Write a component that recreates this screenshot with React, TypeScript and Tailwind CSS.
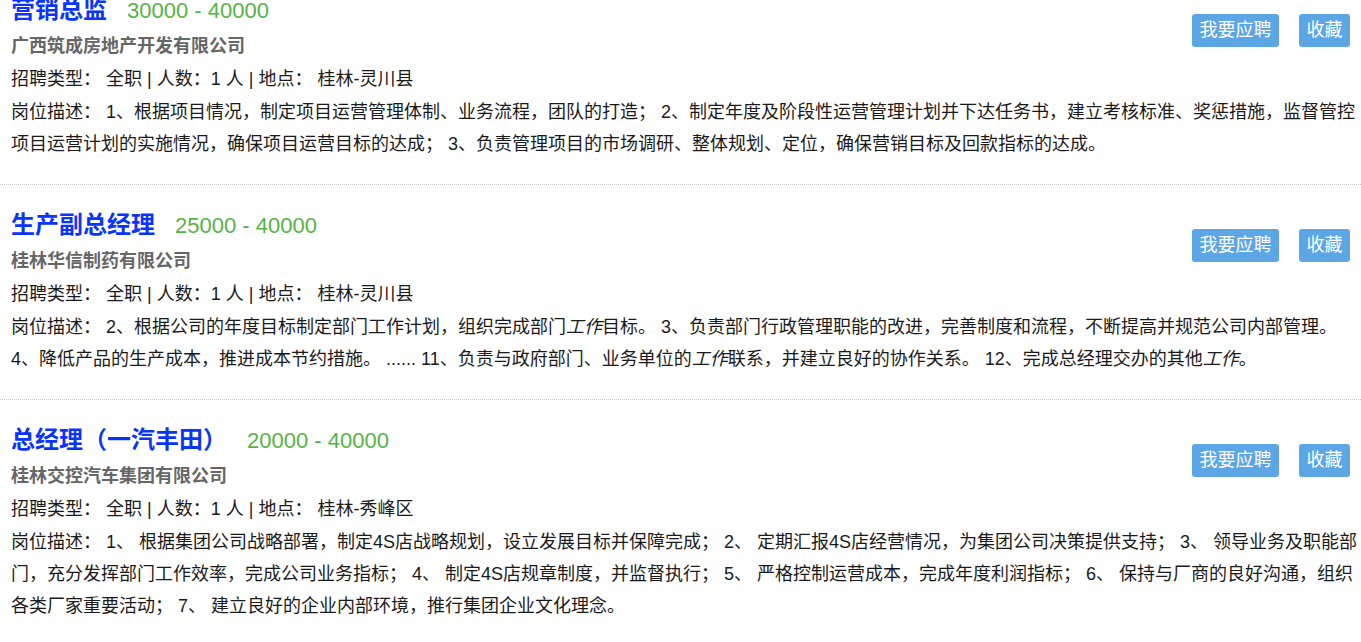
import React from 'react';

type Job = {
  id: number;
  title: string;
  salary: string;
  company: string;
  type: string;
  count: string;
  place: string;
  desc: React.ReactNode;
};

const jobs: Job[] = [
  {
    id: 1,
    title: '营销总监',
    salary: '30000 - 40000',
    company: '广西筑成房地产开发有限公司',
    type: '全职',
    count: '1',
    place: '桂林-灵川县',
    desc: (
      <>
        1、根据项目情况，制定项目运营管理体制、业务流程，团队的打造； 2、制定年度及阶段性运营管理计划并下达任务书，建立考核标准、奖惩措施，监督管控项目运营计划的实施情况，确保项目运营目标的达成；
        3、负责管理项目的市场调研、整体规划、定位，确保营销目标及回款指标的达成。
      </>
    ),
  },
  {
    id: 2,
    title: '生产副总经理',
    salary: '25000 - 40000',
    company: '桂林华信制药有限公司',
    type: '全职',
    count: '1',
    place: '桂林-灵川县',
    desc: (
      <>
        2、根据公司的年度目标制定部门工作计划，组织完成部门<em>工作</em>目标。 3、负责部门行政管理职能的改进，完善制度和流程，不断提高并规范公司内部管理。 4、降低产品的生产成本，推进成本节约措施。 ...... 11、负责与政府部门、业务单位的<em>工作</em>联系，并建立良好的协作关系。 12、完成总经理交办的其他<em>工作</em>。
      </>
    ),
  },
  {
    id: 3,
    title: '总经理（一汽丰田）',
    salary: '20000 - 40000',
    company: '桂林交控汽车集团有限公司',
    type: '全职',
    count: '1',
    place: '桂林-秀峰区',
    desc: (
      <>
        1、 根据集团公司战略部署，制定4S店战略规划，设立发展目标并保障完成； 2、 定期汇报4S店经营情况，为集团公司决策提供支持； 3、 领导业务及职能部门，充分发挥部门工作效率，完成公司业务指标； 4、 制定4S店规章制度，并监督执行； 5、 严格控制运营成本，完成年度利润指标； 6、 保持与厂商的良好沟通，组织各类厂家重要活动； 7、 建立良好的企业内部环境，推行集团企业文化理念。
      </>
    ),
  },
];

function JobItem({ job }: { job: Job }) {
  return (
    <div className="border-b border-dotted border-[#c8c8c8] pl-[11px] pr-[3px] pt-[20px] pb-[24px]">
      <div className="flex items-start">
        <div className="flex-1">
          <div className="flex items-center h-[40px]">
            <span className="text-[24px] font-bold text-[#0b35f6]">{job.title}</span>
            <span className="ml-[20px] text-[22px] text-[#55b446]">{job.salary}</span>
          </div>
          <div className="text-[18px] leading-[33px] font-bold text-[#666]">{job.company}</div>
        </div>
        <div className="flex gap-[20px] mt-[24px] mr-[8px]">
          <button className="bg-[#5ca6e6] text-white text-[18px] leading-[33px] px-[7.5px] rounded-[3px]">我要应聘</button>
          <button className="bg-[#5ca6e6] text-white text-[18px] leading-[33px] px-[7.5px] rounded-[3px]">收藏</button>
        </div>
      </div>
      <div className="text-[18px] leading-[33px] text-[#1a1a1a]">
        招聘类型： 全职 | 人数：{job.count} 人 | 地点： {job.place}
      </div>
      <div className="text-[18px] leading-[32px] text-[#1a1a1a]">岗位描述： {job.desc}</div>
    </div>
  );
}

export default function App() {
  return (
    <div
      className="w-[1361px] h-[642px] overflow-hidden bg-white"
      style={{ fontFamily: '"Liberation Sans", "Noto Sans CJK SC", sans-serif' }}
    >
      <div className="-mt-[30px]">
        {jobs.map((job) => (
          <JobItem key={job.id} job={job} />
        ))}
      </div>
    </div>
  );
}
